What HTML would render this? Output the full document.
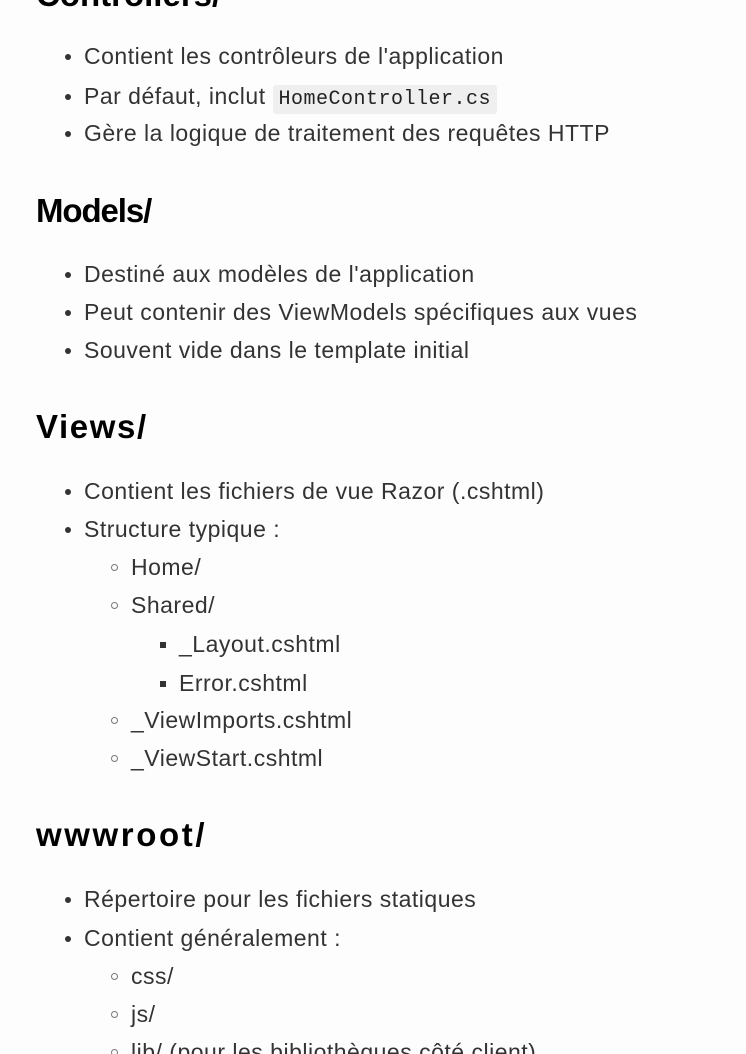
<!DOCTYPE html>
<html><head><meta charset="utf-8"><style>
html,body{margin:0;padding:0;width:746px;height:1054px;overflow:hidden;background:#fdfdfd;}
body{position:relative;font-family:"Liberation Sans",Arial,sans-serif;}
.l{position:absolute;white-space:nowrap;font-size:23px;letter-spacing:0.5px;line-height:30px;color:#333;}
.h{position:absolute;white-space:nowrap;font-size:33px;line-height:40px;font-weight:bold;color:#000;left:36px;letter-spacing:0px}
.b1{position:absolute;width:6px;height:6px;border-radius:50%;background:#333;}
.b2{position:absolute;width:5px;height:5px;border-radius:50%;border:1.3px solid #777;}
.b3{position:absolute;width:6px;height:6px;background:#333;}
code{font-family:"Liberation Mono",monospace;font-size:20px;letter-spacing:0.5px;background:#efefef;padding:3px 6px;border-radius:3px;color:#222}
</style></head><body>
<div class="h" style="top:-25px">Controllers/</div>

<div class="b1" style="left:65px;top:54px"></div><div class="l" style="left:84px;top:41px">Contient les contrôleurs de l'application</div>
<div class="b1" style="left:65px;top:94px"></div><div class="l" style="left:84px;top:81px">Par défaut, inclut <code>HomeController.cs</code></div>
<div class="b1" style="left:65px;top:131px"></div><div class="l" style="left:84px;top:118px">Gère la logique de traitement des requêtes HTTP</div>

<div class="h" style="top:191px;letter-spacing:-1.1px">Models/</div>
<div class="b1" style="left:65px;top:272px"></div><div class="l" style="left:84px;top:259px">Destiné aux modèles de l'application</div>
<div class="b1" style="left:65px;top:310px"></div><div class="l" style="left:84px;top:297px">Peut contenir des ViewModels spécifiques aux vues</div>
<div class="b1" style="left:65px;top:348px"></div><div class="l" style="left:84px;top:335px">Souvent vide dans le template initial</div>

<div class="h" style="top:407px;letter-spacing:1.6px">Views/</div>
<div class="b1" style="left:65px;top:489px"></div><div class="l" style="left:84px;top:476px">Contient les fichiers de vue Razor (.cshtml)</div>
<div class="b1" style="left:65px;top:527px"></div><div class="l" style="left:84px;top:514px">Structure typique :</div>
<div class="b2" style="left:111px;top:564px"></div><div class="l" style="left:131px;top:552px">Home/</div>
<div class="b2" style="left:111px;top:602px"></div><div class="l" style="left:131px;top:590px">Shared/</div>
<div class="b3" style="left:160px;top:642px"></div><div class="l" style="left:179px;top:629px">_Layout.cshtml</div>
<div class="b3" style="left:160px;top:681px"></div><div class="l" style="left:179px;top:668px">Error.cshtml</div>
<div class="b2" style="left:111px;top:717px"></div><div class="l" style="left:131px;top:705px">_ViewImports.cshtml</div>
<div class="b2" style="left:111px;top:755px"></div><div class="l" style="left:131px;top:743px">_ViewStart.cshtml</div>

<div class="h" style="top:815px;letter-spacing:2.6px">wwwroot/</div>
<div class="b1" style="left:65px;top:897px"></div><div class="l" style="left:84px;top:884px">Répertoire pour les fichiers statiques</div>
<div class="b1" style="left:65px;top:936px"></div><div class="l" style="left:84px;top:923px">Contient généralement :</div>
<div class="b2" style="left:111px;top:973px"></div><div class="l" style="left:131px;top:961px">css/</div>
<div class="b2" style="left:111px;top:1011px"></div><div class="l" style="left:131px;top:999px">js/</div>
<div class="b2" style="left:111px;top:1049px"></div><div class="l" style="left:131px;top:1037px">lib/ (pour les bibliothèques côté client)</div>
</body></html>
